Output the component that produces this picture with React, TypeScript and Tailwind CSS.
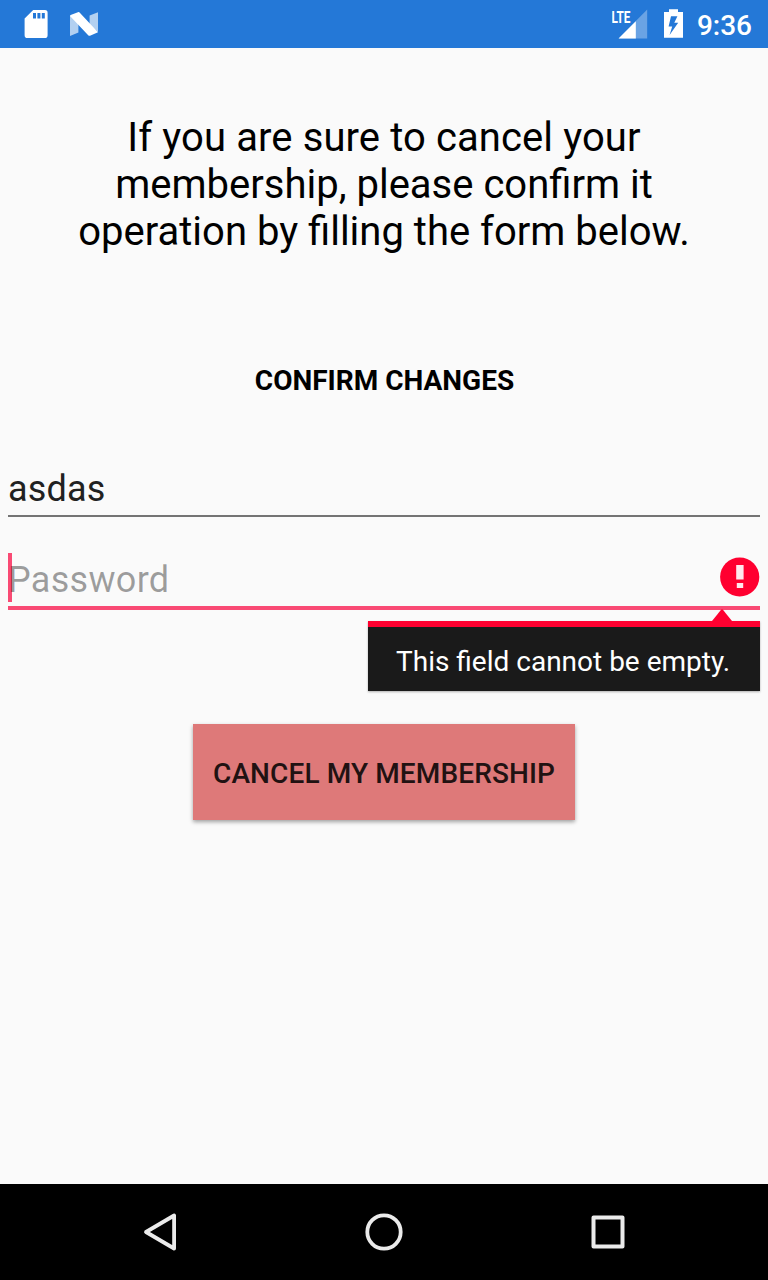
import React from "react";

function StatusBar() {
  return (
    <header className="flex h-12 shrink-0 items-center justify-between bg-[#2478d7] pr-4 pl-6 text-white">
      <div className="flex h-full items-center">
        <svg width="24" height="48" viewBox="24 0 24 48" fill="currentColor">
          <path
            fillRule="evenodd"
            d="M33.2 10H45Q47.6 10 47.6 12.8V35.2Q47.6 38 45 38H27.2Q24.6 38 24.6 35.2V18.4ZM33 13V18.4H36V13ZM37.4 13V18.4H40.4V13ZM41.8 13V18.4H44.8V13Z"
          />
        </svg>
        <svg className="ml-[22px]" width="28" height="48" viewBox="70 0 28 48" fill="currentColor">
          <path opacity=".65" d="M70 15.2L78.4 22V32.5L70 36ZM98 12.3V32L89.6 25V15.5Z" />
          <path d="M70 16L70.6 15L78.6 12.1Q79.2 12 79.8 12.7L98 32.3L90 35.8Q89 36 88.2 35.3Z" />
        </svg>
      </div>
      <div className="flex h-full items-center">
        <svg width="72" height="48" viewBox="612 0 72 48" fill="currentColor">
          <path opacity=".32" d="M647.2 9.6V38.4H618.6Z" />
          <path d="M635.8 21.2V38.4H618.6Z" />
          <text
            x="611.4"
            y="22.6"
            textLength="19"
            lengthAdjust="spacingAndGlyphs"
            className="font-[Roboto,sans-serif] text-[17px] font-bold"
          >
            LTE
          </text>
          <path
            fillRule="evenodd"
            d="M669 9.3H678V12H683V37.8H664V12H669ZM671 16.2L668.6 26.6H672.2L669.6 35L678.2 22.8H674.3L677.4 16.2Z"
          />
        </svg>
        <span className="ml-[13px] pt-[3px] text-[28px] leading-[33px] font-medium">9:36</span>
      </div>
    </header>
  );
}

function PasswordError() {
  return (
    <div className="absolute top-[74px] right-0 h-[70px] w-[392px] border-t-[6px] border-[#ff0030] bg-[#1a1a1a] pt-[18px] pl-7 text-[28px] leading-[33px] whitespace-nowrap text-white shadow-[0_1px_2px_rgba(0,0,0,0.3)]">
      <svg className="absolute -top-[18px] right-[28px]" width="20" height="13" viewBox="0 0 20 13">
        <path d="M0 12L9.3 .5Q10 0 10.7 .5L20 12V13H0Z" fill="#ff0030" />
      </svg>
      This field cannot be empty.
    </div>
  );
}

export default function App() {
  return (
    <div className="flex h-[1280px] w-[768px] flex-col overflow-hidden bg-[#fafafa] font-[Roboto,sans-serif] text-black">
      <StatusBar />
      <main className="flex flex-1 flex-col items-center px-2 pt-[66px]">
        <h1 className="text-center text-[40px] leading-[47px]">
          <span className="tracking-[0.1px]">If you are sure to cancel your</span>
          <br />
          membership, please confirm it
          <br />
          operation by filling the form below.
        </h1>
        <h2 className="mt-[109px] pl-px text-[28px] leading-[33px] font-bold">CONFIRM CHANGES</h2>
        <input
          aria-label="Username"
          defaultValue="asdas"
          className="mt-[71px] h-[49px] w-full border-b-2 border-[#747474] bg-transparent pb-[5px] text-[36px] leading-[42px] tracking-[0.2px] text-[#212121] outline-none"
        />
        <div className="relative mt-[30px] flex h-[63px] w-full items-start border-b-4 border-[#f94a74]">
          <span className="absolute top-[6px] left-0 h-[49px] w-1 bg-[#f94a74]" />
          <input
            aria-label="Password"
            type="password"
            placeholder="Password"
            className="relative mt-[12px] h-[42px] min-w-0 flex-1 bg-transparent text-[36px] leading-[42px] tracking-[0.3px] outline-none placeholder:text-black/38"
          />
          <svg className="mt-[10px]" width="40" height="40" viewBox="0 0 40 40">
            <circle cx="19.7" cy="20" r="19.6" fill="#ff0030" />
            <path d="M16.2 8H23.6V22.4H16.2ZM16.8 26H23.2V31H16.8Z" fill="#ffe9ed" />
          </svg>
          <PasswordError />
        </div>
        <button className="mt-[114px] h-24 w-[382px] bg-[#de7979] pt-[2px] text-[28px] leading-[33px] font-medium tracking-[0.12px] text-[#211212] shadow-[0_2px_4px_rgba(0,0,0,0.36)]">
          CANCEL MY MEMBERSHIP
        </button>
      </main>
      <nav className="flex h-24 shrink-0 items-center justify-between bg-black px-[140px] text-[#ebebeb]">
        <svg width="40" height="40" viewBox="0 0 40 40" fill="none" stroke="currentColor" strokeWidth="3.8" strokeLinejoin="round">
          <path d="M34.1 3.5V36.5L6 20Z" />
        </svg>
        <svg width="40" height="40" viewBox="0 0 40 40" fill="none" stroke="currentColor" strokeWidth="3.8">
          <circle cx="20" cy="20" r="16.7" />
        </svg>
        <svg width="40" height="40" viewBox="0 0 40 40" fill="none" stroke="currentColor" strokeWidth="4" strokeLinejoin="round">
          <path d="M5.5 5.5H34.5V34.5H5.5Z" />
        </svg>
      </nav>
    </div>
  );
}
